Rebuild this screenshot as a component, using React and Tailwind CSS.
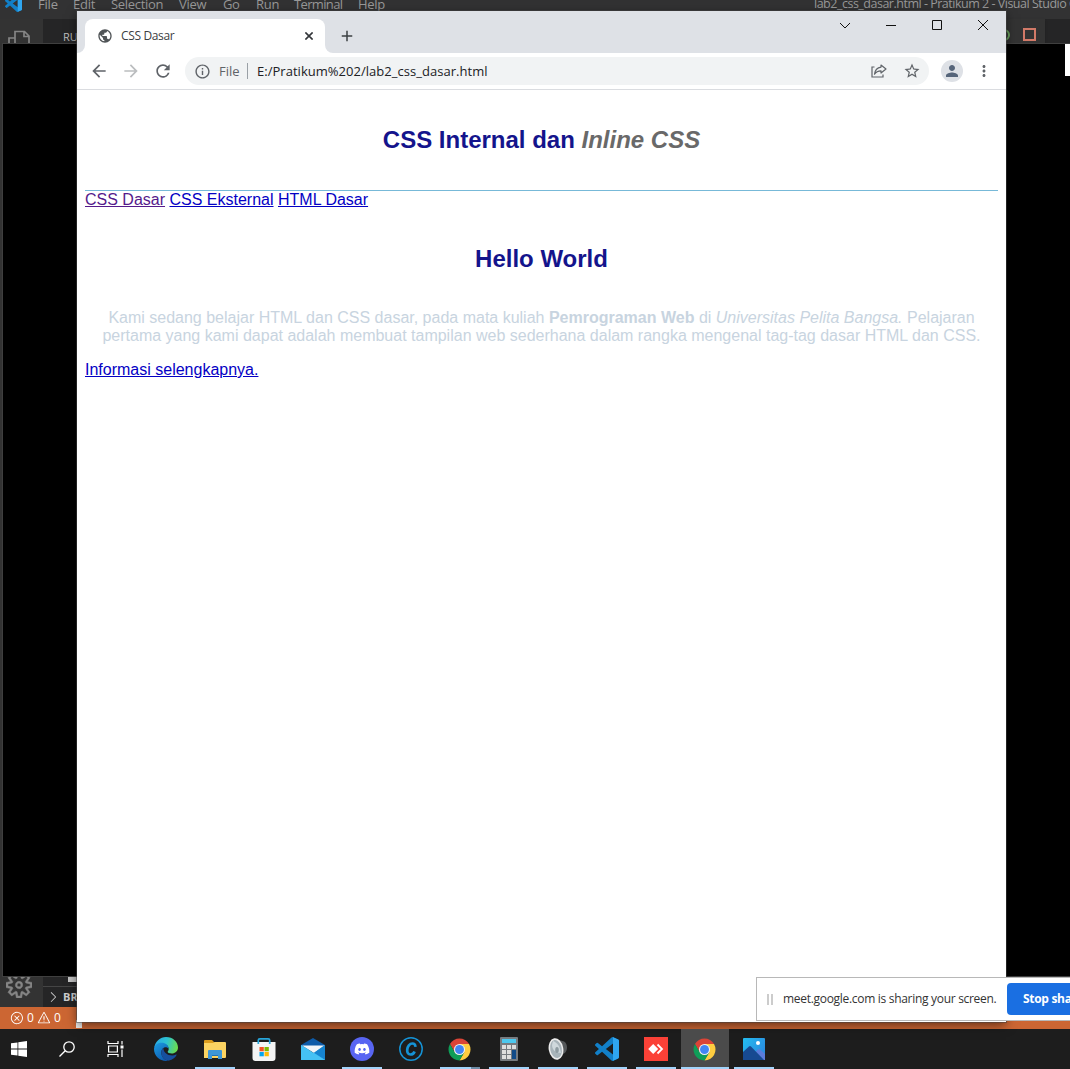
import React from "react";
import {
  MdPublic, MdArrowBack, MdArrowForward, MdRefresh, MdInfoOutline, MdStarBorder,
  MdPerson, MdMoreVert, MdAdd,
} from "react-icons/md";
import { VscSettingsGear, VscError, VscWarning, VscChevronRight } from "react-icons/vsc";
import { FaDiscord } from "react-icons/fa";

const UI = "font-['Open_Sans','Noto_Sans',sans-serif]";

function VsCodeLogo({ className }) {
  return (
    <svg viewBox="0 0 24 24" className={className}>
      <path fill="#1280c8" d="M23.15 2.587L18.21.21a1.494 1.494 0 0 0-1.705.29l-9.46 8.63-4.12-3.128a.999.999 0 0 0-1.276.057L.327 7.261A1 1 0 0 0 .326 8.74L3.899 12 .326 15.26a1 1 0 0 0 .001 1.479L1.65 17.94a.999.999 0 0 0 1.276.057l4.12-3.128 9.46 8.63a1.492 1.492 0 0 0 1.704.29l4.942-2.377A1.5 1.5 0 0 0 24 20.06V3.939a1.5 1.5 0 0 0-.85-1.352zm-5.146 14.861L10.826 12l7.178-5.448v10.896z" />
      <path fill="#2fa6f0" d="M18.004.1l.206.11 4.94 2.377A1.5 1.5 0 0 1 24 3.939V20.06a1.5 1.5 0 0 1-.848 1.352l-4.942 2.377-.206.08z" />
    </svg>
  );
}

function ChromeLogo() {
  return (
    <svg viewBox="0 0 48 48" className="mr-px size-[23px]">
      <path fill="#db4437" d="M4.100 12.500A23 23 0 0 1 43.900 12.500H24L14 29.750z" />
      <path fill="#ffcd40" d="M43.900 12.500A23 23 0 0 1 24 47L34 29.750L24 12.500z" />
      <path fill="#0f9d58" d="M4.100 12.500L14 29.750H34L24 47A23 23 0 0 1 4.100 12.500z" />
      <circle cx="24" cy="24" r="11.500" fill="#f1f1f1" />
      <circle cx="24" cy="24" r="9.300" fill="#4285f4" />
    </svg>
  );
}

const icons = {
  edge: (
    <svg viewBox="0 0 24 24" className="size-6">
      <defs>
        <linearGradient id="edgeTop" x1="0" y1="0.3" x2="1" y2="0.5">
          <stop offset="0" stopColor="#2aa9e6" /><stop offset="0.5" stopColor="#2cc3d2" /><stop offset="1" stopColor="#6bdc4c" />
        </linearGradient>
        <linearGradient id="edgeLow" x1="0" y1="0" x2="0.600" y2="1">
          <stop offset="0" stopColor="#1b9de2" /><stop offset="1" stopColor="#0f5cb0" />
        </linearGradient>
      </defs>
      <path fill="url(#edgeTop)" d="M.3 10.600C1.300 4.300 6.200 0 12 0c7 0 12 5 12 10.500 0 3.600-2.900 6-6.200 6-2.600 0-4.100-.8-4.100-1.700 0-.6 1-1 1-2.800 0-2.700-2.600-5.200-6.500-5.200C4.300 6.800 1.300 8.700.3 10.600z" />
      <path fill="url(#edgeLow)" d="M0 12c.2-3.500 3.300-6.200 7.600-6.200 4 0 7.100 2.600 7.100 6-.7-1-1.900-1.500-3.200-1.500-2 0-4.200 2.200-4.200 5.300 0 4.200 3.200 7.500 6.900 8.200C6.500 25 0 19.200 0 12z" />
      <path fill="#164f9e" d="M9.400 11c-1.300 1-2.100 2.700-2.100 4.600 0 4.800 3.900 8.400 7.800 8 3.300-.8 6.100-2.900 7.500-5.600.2-.4-.1-.6-.5-.4-1.100.6-2.500.9-4 .9-4.800 0-8.800-3.300-8.700-7.500z" />
    </svg>
  ),
  explorer: (
    <svg viewBox="0 0 22 19" className="h-[19px] w-[22px]">
      <path fill="#dc9d1d" d="M0 1a1 1 0 0 1 1-1h7l2 2v3H0z" />
      <path fill="#fcd462" d="M0 3h9l1.500-1H21a1 1 0 0 1 1 1v14a1 1 0 0 1-1 1H0z" />
      <path fill="#3e96d7" d="M4 19v-8a1 1 0 0 1 1-1h12a1 1 0 0 1 1 1v8h-4v-4H8v4z" />
      <path fill="#2372b5" d="M8 15h6v1H8z" />
    </svg>
  ),
  store: (
    <svg viewBox="0 0 24 24" className="size-6">
      <path fill="#f4f4f4" d="M.5 5h23v16a3 3 0 0 1-3 3h-17a3 3 0 0 1-3-3z" />
      <path fill="none" stroke="#27a7dc" strokeWidth="1.700" d="M6.300 7V3.300q0-1.500 1.500-1.500h8.400q1.500 0 1.500 1.500V7" />
      <path fill="#f35325" d="M7.500 10h4.300v4.300H7.500z" /><path fill="#7fba00" d="M12.500 10h4.300v4.300h-4.300z" />
      <path fill="#05a6f0" d="M7.500 15h4.300v4.300H7.500z" /><path fill="#ffba08" d="M12.500 15h4.300v4.300h-4.300z" />
    </svg>
  ),
  mail: (
    <svg viewBox="0 0 24 22" className="h-[22px] w-6">
      <path fill="#0e5ba8" d="M0 7l12-7 12 7v5H0z" />
      <path fill="#2cabea" d="M0 7l12 8 12-8v15H0z" />
      <path fill="#f2f5f8" d="M1 7.500h22.500L13 15z" />
      <path fill="#1684d0" d="M24 7v15L13 14.800z" />
      <path fill="#45c1f4" d="M0 7l24 15H0z" />
    </svg>
  ),
  discord: (
    <span className="flex size-6 items-center justify-center rounded-full bg-[#5865f2] text-white"><FaDiscord className="size-4" /></span>
  ),
  cubic: (
    <svg viewBox="0 0 24 24" className="size-6" fill="none" stroke="#1593d6">
      <circle cx="12" cy="12" r="11.200" strokeWidth="1.500" />
      <path strokeWidth="2.700" d="M16.300 9.900c.2-2.200-.9-3.400-2.900-3.400-2.700 0-5 2.800-5.200 6.400-.2 2.900 1.100 4.600 3.300 4.600 1.900 0 3.400-1.100 4.100-3" />
    </svg>
  ),
  chrome: <ChromeLogo />,
  calc: (
    <svg viewBox="0 0 18 24" className="h-6 w-[18px]">
      <rect width="18" height="24" rx="1" fill="#767b80" />
      <rect x="2" y="2" width="14" height="4" fill="#4cc8ef" />
      {[8, 13, 18].map((y) => [2, 7, 12].map((x) => (
        <rect key={x + "-" + y} x={x} y={y} width="4" height="4" fill="#dedede" />
      )))}
      <rect x="12" y="13" width="4" height="9" fill="#124b88" />
    </svg>
  ),
  speaker: (
    <svg viewBox="0 0 20 24" className="h-6 w-5">
      <path fill="#55585a" d="M8 2l8 2.500c4 2 4 10 0 12L10 21z" />
      <ellipse cx="8" cy="12" rx="7.300" ry="10.800" transform="rotate(-10 8 12)" fill="#ebebeb" />
      <ellipse cx="8" cy="12" rx="5.800" ry="9.200" transform="rotate(-10 8 12)" fill="#a8b4ba" />
      <path fill="#cfd8dc" d="M5 4c5 2 7 6 8 12-5 0-9-3-9-8z" />
      <ellipse cx="9" cy="13" rx="1.800" ry="3" fill="#8e9ba1" />
    </svg>
  ),
  vscode: <VsCodeLogo className="size-6" />,
  anydesk: (
    <svg viewBox="0 0 24 24" className="size-6">
      <path fill="#fb4137" d="M0 0h24v24H0z" />
      <path fill="#fff" d="M9.200 7l5 5-5 5-5-5z" />
      <path fill="none" stroke="#fff" strokeWidth="1.800" d="M13.500 7.500L18 12l-4.500 4.500" />
    </svg>
  ),
  photos: (
    <svg viewBox="0 0 22 22" className="size-[22px]">
      <defs>
        <linearGradient id="sky" x1="0" x2="1" y2="0.600"><stop stopColor="#23bdf0" /><stop offset="1" stopColor="#2a8ce0" /></linearGradient>
      </defs>
      <rect width="22" height="22" rx="1" fill="url(#sky)" />
      <path fill="#5b7cdb" d="M10 16l5-4.500q1-.8 2 0l5 4.500v6H10z" />
      <path fill="#174a91" d="M0 14l6-5.500q1-.8 2 0L21 22H0z" />
      <circle cx="15" cy="5" r="2" fill="#fff" />
    </svg>
  ),
};

const apps = [
  ["edge", ""], ["explorer", "run"], ["store", ""], ["mail", ""], ["discord", "run"], ["cubic", ""],
  ["chrome", "multi"], ["calc", "run"], ["speaker", "run"], ["vscode", "run"], ["anydesk", "run"],
  ["chrome", "active"], ["photos", "run"],
];

function Taskbar() {
  return (
    <footer className="flex h-10 items-stretch bg-[#1d1d1d]">
      <div className="-ml-[5px] mr-[3px] flex text-white">
        <div className="flex w-12 items-center justify-center">
          <svg viewBox="0 0 16 16" className="size-4" fill="#fff">
            <path d="M0 2.300l6.500-.9v6.100H0zM7.300 1.300L16 0v7.500H7.300zM0 8.400h6.500v6.200L0 13.700zM7.300 8.400H16V16l-8.700-1.200z" />
          </svg>
        </div>
        <div className="flex w-12 items-center justify-center">
          <svg viewBox="0 0 16 16" className="size-4" fill="none" stroke="#fff" strokeWidth="1.300">
            <circle cx="10" cy="6" r="5.200" /><path d="M6.200 9.800L.5 15.500" />
          </svg>
        </div>
        <div className="flex w-12 items-center justify-center">
          <svg viewBox="0 0 17 16" className="h-4 w-[17px]" fill="none" stroke="#fff" strokeWidth="1.200">
            <path d="M1 0v2.500h10V0M1 16v-2.500h10V16M1.600 5h8.800v6H1.600zM15 0v3.500M15 8.500V16" />
            <path fill="#fff" stroke="none" d="M13.500 4.500h3v3h-3z" />
          </svg>
        </div>
      </div>
      <div className="flex gap-px">
        {apps.map(([name, state], i) => (
          <div key={i} className={"relative flex w-12 items-center justify-center " + (state === "active" ? "bg-[#4b4b4b]" : "")}>
            {icons[name]}
            {state === "run" && <span className="absolute bottom-0 left-1 h-0.5 w-10 bg-[#a2d3fa]" />}
            {state === "active" && <span className="absolute bottom-0 left-0 h-0.5 w-12 bg-[#a2d3fa]" />}
            {state === "multi" && (
              <span className="absolute bottom-0 left-1 flex h-0.5 w-10">
                <span className="w-[31px] bg-[#a2d3fa]" /><span className="w-[9px] bg-[#6e8ca6]" />
              </span>
            )}
          </div>
        ))}
      </div>
    </footer>
  );
}

function Editor() {
  return (
    <div className={"relative flex h-[1029px] flex-col overflow-hidden bg-[#252526] " + UI}>
      <div className="flex h-[19px] shrink-0 items-start bg-[#323233] text-[13px] leading-[18px] text-[#999]">
        <VsCodeLogo className="-mt-[5px] ml-[5px] size-[17px] shrink-0" />
        <nav className="-mt-[5px] ml-4 flex whitespace-nowrap">
          <span className="w-[35px] tracking-[-0.2px]">File</span>
          <span className="w-[38px] tracking-[-0.2px]">Edit</span>
          <span className="w-[68px] tracking-[-0.3px]">Selection</span>
          <span className="w-11 tracking-[-0.3px]">View</span>
          <span className="w-[33px] tracking-[-0.5px]">Go</span>
          <span className="w-[38px] tracking-[-0.3px]">Run</span>
          <span className="w-16 tracking-[-0.65px]">Terminal</span>
          <span className="w-10 tracking-[-0.3px]">Help</span>
        </nav>
        <span className="-mt-[5px] ml-[416px] whitespace-nowrap text-[12.5px] tracking-[-0.49px]">lab2_css_dasar.html - Pratikum 2 - Visual Studio Code</span>
      </div>
      <div className="flex min-h-0 grow">
        <aside className="flex w-[43px] flex-col items-center justify-between bg-[#333333] text-[#858585]">
          <svg viewBox="0 0 24 24" className="mr-[5px] mt-[11px] size-6" fill="none" stroke="currentColor" strokeWidth="1.700">
            <path d="M8 1.500h9.500L22 6v12H8zM17 1.500V6.500h5M8 8H2v15h14v-5" />
          </svg>
          <VscSettingsGear className="mb-[9px] mr-[5px] size-[26px] stroke-[0.4]" />
        </aside>
        <div className="flex w-[200px] flex-col justify-between">
          <span className="ml-5 mt-[10px] text-[11px] leading-4 text-[#bbb]">RUN</span>
          <div>
            <div className="mb-1 ml-[25px] h-1.5 w-10 bg-[#c5c5c5]" />
            <div className="flex h-[21px] items-center border-t border-[#454545] text-[11px] font-bold text-[#ccc]">
              <VscChevronRight className="ml-[2px] mr-0.5 size-4" /><span>BREAKPOINTS</span>
            </div>
          </div>
        </div>
        <div className="ml-auto mr-[25px] flex h-6 w-[50px] items-center bg-[#333] shadow">
          <span className="ml-[3px] mt-[7px] size-3 shrink-0 rounded-full border-2 border-[#6aa35e]" />
          <span className="ml-[13px] mt-[7px] size-[13px] shrink-0 border-2 border-[#d27a68]" />
        </div>
      </div>
      <div className="flex h-[22px] shrink-0 items-center bg-[#cc6633] pl-[10px] text-[12px] text-white">
        <VscError className="size-[14px]" /><span className="ml-[3px]">0</span>
        <VscWarning className="ml-[3px] size-[14px]" /><span className="ml-[3px]">0</span>
        <span className="ml-[15px] mt-3 h-2 w-1.5 bg-[#eee]" />
      </div>
      <div className="absolute left-[2px] top-[43px] h-[934px] w-[1068px] border border-r-0 border-[#3f3f3f] bg-black">
        <div className="ml-auto h-8 w-[5px] bg-white" />
      </div>
    </div>
  );
}

function Browser() {
  return (
    <section className="absolute left-[77px] top-[11px] flex h-[1011px] w-[929px] flex-col overflow-hidden bg-white shadow-[0_0_0_1px_#44444480,0_3px_10px_#00000088]">
      <div className={"flex h-[42px] shrink-0 bg-[#dee1e6] pt-2 text-[#3c4043] " + UI}>
        <div className="flex w-2 items-end bg-white"><div className="h-[34px] w-2 rounded-br-lg bg-[#dee1e6]" /></div>
        <div className="flex w-60 items-center rounded-t-lg bg-white pl-3">
          <MdPublic className="size-4 text-[#505457]" />
          <span className="ml-2 text-[12px] tracking-[-0.35px]">CSS Dasar</span>
          <svg viewBox="0 0 8 8" className="ml-auto mr-3 size-2" fill="none" stroke="#33363a" strokeWidth="1.600"><path d="M.4.4l7.200 7.200M7.600.4L.4 7.600" /></svg>
        </div>
        <div className="w-2 bg-white"><div className="h-[34px] w-2 rounded-bl-lg bg-[#dee1e6]" /></div>
        <MdAdd className="ml-[5px] mt-[8px] size-[18px] text-[#3c4043]" />
        <div className="-mt-2 ml-auto flex h-7 items-center text-[#111]">
          {["M1 4l5 5 5-5", "M1 6.500h10", "M1.500 1.500h9v9h-9z", "M1 1l10 10M11 1L1 11"].map((d) => (
            <span key={d} className="flex w-[46px] justify-center"><svg viewBox="0 0 12 12" className="size-3" fill="none" stroke="currentColor" strokeWidth="1"><path d={d} /></svg></span>
          ))}
        </div>
      </div>
      <div className={"flex h-[37px] shrink-0 items-center border-b border-[#dadce0] pl-3 text-[#5f6368] " + UI}>
        <MdArrowBack className="size-5" />
        <MdArrowForward className="ml-3 size-5 text-[#bbbdbf]" />
        <MdRefresh className="ml-3 size-5" />
        <div className="ml-3 flex h-7 w-[744px] items-center rounded-full bg-[#f1f3f4] pl-[9px] text-[13px]">
          <MdInfoOutline className="size-[17px]" />
          <span className="ml-2 mt-px w-[21px]">File</span>
          <span className="ml-[7px] h-4 w-px bg-[#9aa0a6]" />
          <span className="ml-[9px] mt-px whitespace-nowrap tracking-[0.03px] text-[#202124]">E:/Pratikum%202/lab2_css_dasar.html</span>
          <svg viewBox="0 0 16 16" className="ml-auto mr-4 size-4" fill="none" stroke="#5f6368" strokeWidth="1.200">
            <path d="M3.500 4H1v10h11v-2.500" /><path strokeLinejoin="round" d="M10 2l5 4-5 4V7.800C7.200 7.800 5 8.800 3.500 11.200 4 7 6.500 4.500 10 4.100z" />
          </svg>
          <MdStarBorder className="mr-2 size-[18px]" />
        </div>
        <div className="ml-3 flex size-[22px] items-center justify-center rounded-full bg-[#dee1e6] text-[#56657a]"><MdPerson className="size-[18px]" /></div>
        <MdMoreVert className="ml-3 size-[18px]" />
      </div>
      <main className="flex flex-col px-2 pt-2 font-['Liberation_Sans',Arial,sans-serif] text-[16px] leading-[18px] text-[#0400c4]">
        <h1 className="flex h-[84px] items-center justify-center whitespace-pre text-[24px] font-bold leading-7 text-[#14148c]">
          <span>CSS Internal dan <i className="text-[#696969]">Inline CSS</i></span>
        </h1>
        <nav className="mt-2 border-t border-[#77b9d8] whitespace-nowrap">
          <a className="text-[#551a8b] underline">CSS Dasar</a> <a className="underline">CSS Eksternal</a> <a className="underline">HTML Dasar</a>
        </nav>
        <h2 className="mt-9 text-center text-[24px] font-bold leading-7 text-[#14148c]">Hello World</h2>
        <p className="mt-9 text-center whitespace-nowrap text-[#c8d4e0]">
          Kami sedang belajar HTML dan CSS dasar, pada mata kuliah <b>Pemrograman Web</b> di <i>Universitas Pelita Bangsa.</i> Pelajaran
          <br />pertama yang kami dapat adalah membuat tampilan web sederhana dalam rangka mengenal tag-tag dasar HTML dan CSS.
        </p>
        <a className="mt-4 self-start underline">Informasi selengkapnya.</a>
      </main>
    </section>
  );
}

export default function App() {
  return (
    <div className="relative h-[1069px] w-[1070px] overflow-hidden bg-[#1d1d1d]">
      <Editor />
      <Browser />
      <div className={"absolute left-[756px] top-[977px] flex h-11 w-[314px] items-center overflow-hidden border border-r-0 border-[#b8b8b8] bg-white text-[12px] " + UI}>
        <span className="ml-[10px] h-[11px] w-1.5 shrink-0 border-x-2 border-[#ccc]" />
        <span className="ml-[10px] w-[214px] shrink-0 whitespace-nowrap tracking-[-0.3px] text-[#333]">meet.google.com is sharing your screen.</span>
        <span className="ml-[10px] flex h-8 w-[120px] shrink-0 items-center whitespace-nowrap rounded bg-[#1a6fe2] pl-4 font-bold tracking-[-0.3px] text-white">Stop sharing</span>
      </div>
      <Taskbar />
    </div>
  );
}
